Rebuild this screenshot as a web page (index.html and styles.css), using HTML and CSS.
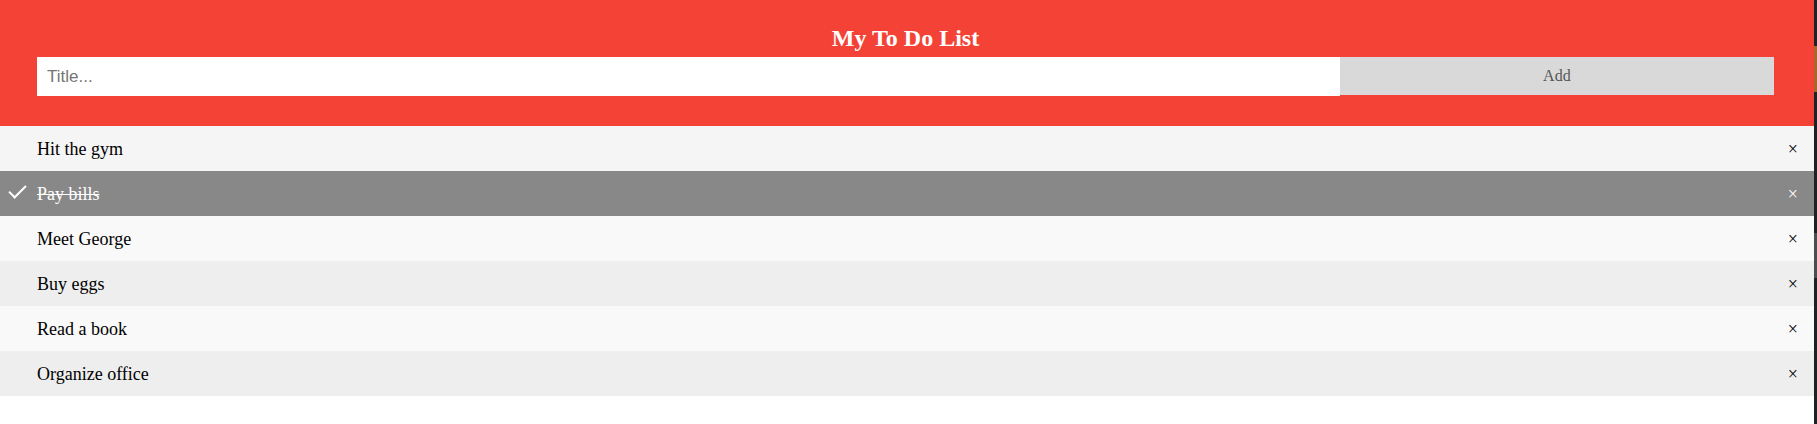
FILE: index.html
```html
<!DOCTYPE html>
<html>
<head>
<meta charset="utf-8">
<title>My To Do List</title>
<link rel="stylesheet" href="styles.css">
</head>
<body>
<div class="page">
  <main class="app">
    <div class="header">
      <h2 class="title">My To Do List</h2>
      <div class="form">
        <input class="title-input" type="text" placeholder="Title...">
        <span class="add-btn">Add</span>
      </div>
    </div>
    <ul class="list">
      <li class="item item-first">Hit the gym<span class="close">×</span></li>
      <li class="item checked">Pay bills<span class="close">×</span></li>
      <li class="item">Meet George<span class="close">×</span></li>
      <li class="item">Buy eggs<span class="close">×</span></li>
      <li class="item">Read a book<span class="close">×</span></li>
      <li class="item">Organize office<span class="close">×</span></li>
    </ul>
  </main>
  <div class="strip">
    <div class="strip-gap-a"></div>
    <div class="strip-orange"></div>
    <div class="strip-gap-b"></div>
    <div class="strip-thumb"></div>
  </div>
</div>
</body>
</html>
```

FILE: styles.css
```css
* { box-sizing: border-box; }

html, body {
  margin: 0;
  padding: 0;
  height: 100%;
  background: #ffffff;
}

body {
  font-family: "Liberation Serif", "Times New Roman", serif;
}

.page {
  display: flex;
  min-height: 424px;
  height: 100%;
}

.app {
  flex: 1 1 auto;
  min-width: 0;
}

.strip {
  flex: 0 0 3px;
  width: 3px;
  background: #1f2124;
  display: flex;
  flex-direction: column;
}

.strip-gap-a { height: 46px; }
.strip-orange { height: 46px; background: #a7662c; }
.strip-gap-b { height: 141px; }
.strip-thumb { height: 45px; background: #4b4d51; }

.header {
  background-color: #f44336;
  padding: 19px 40px 30px 37px;
  color: #ffffff;
  text-align: center;
}

.title {
  margin: 5px;
  font-size: 24px;
  line-height: 28px;
  font-weight: bold;
}

.form {
  display: flex;
  align-items: flex-start;
}

.title-input {
  flex: 0 0 75%;
  margin: 0;
  border: none;
  border-radius: 0;
  height: 39px;
  padding: 10px;
  font-family: "Liberation Sans", Arial, sans-serif;
  font-size: 17px;
  color: #000;
  background: #fff;
  outline: none;
}

.title-input::placeholder {
  color: #757575;
}

.add-btn {
  flex: 1 1 auto;
  height: 38px;
  padding: 10px;
  background: #d9d9d9;
  color: #555555;
  text-align: center;
  font-size: 16px;
  line-height: 18px;
  cursor: pointer;
}

.list {
  margin: 0;
  padding: 0;
}

.item {
  position: relative;
  list-style-type: none;
  padding: 13px 8px 11px 37px;
  height: 45px;
  font-size: 18px;
  line-height: 21px;
  background: #eeeeee;
  color: #000;
  cursor: pointer;
}

.item:nth-child(odd) {
  background: #f9f9f9;
}

.item.item-first {
  background: #f5f5f5;
}

.item.checked {
  background: #888888;
  color: #ffffff;
  text-decoration: line-through;
}

.item.checked::before {
  content: "";
  position: absolute;
  border-color: #ffffff;
  border-style: solid;
  border-width: 0 2px 2px 0;
  top: 10px;
  left: 13px;
  transform: rotate(45deg);
  height: 15px;
  width: 7px;
}

.close {
  position: absolute;
  right: 0;
  top: 0;
  padding: 13px 16px 11px;
  text-decoration: none;
}
```
